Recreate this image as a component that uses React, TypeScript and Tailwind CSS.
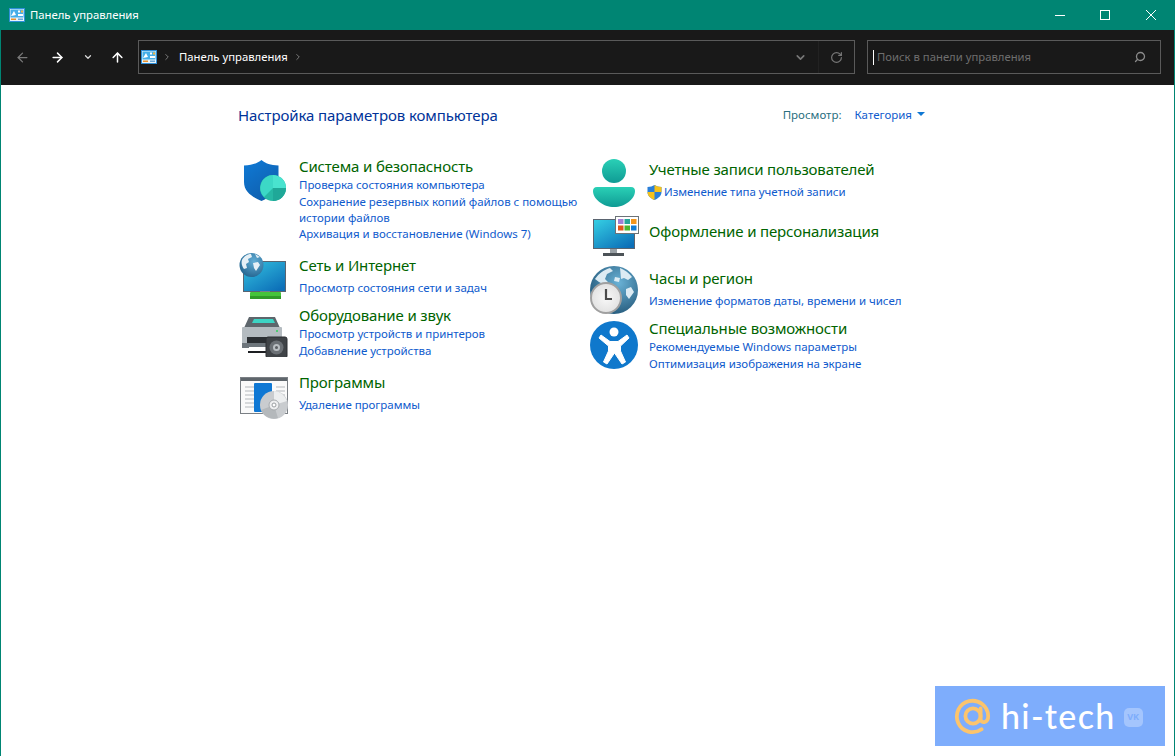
import { ArrowLeft, ArrowRight, ArrowUp, ChevronDown, ChevronRight, RotateCw, Search } from "lucide-react";
import type { ReactNode } from "react";

function PanelIcon({ className }: { className: string }) {
  return (
    <svg viewBox="0 0 16 14" className={className}>
      <rect x="0.5" y="0.5" width="15" height="13" fill="#e8f4fb" stroke="#2f8fd8" />
      <rect x="1.5" y="1.5" width="13" height="8" fill="#45aee8" />
      <path d="M2 8l3-5 2 4z" fill="#fff" />
      <rect x="9" y="2.5" width="2" height="2" fill="#fff" />
      <rect x="12" y="2.5" width="2" height="2" fill="#f2b544" />
      <rect x="9" y="6" width="5" height="2" fill="#fff" />
      <rect x="2" y="10.5" width="5" height="1.5" fill="#e8912d" />
      <rect x="9" y="10.5" width="5" height="1.5" fill="#6aa6d8" />
    </svg>
  );
}

function ShieldIcon() {
  return (
    <svg viewBox="0 0 48 48" className="w-12 h-12">
      <defs>
        <linearGradient id="sh" x1="0" y1="0" x2="0.6" y2="1">
          <stop offset="0" stopColor="#0f7ad6" />
          <stop offset="1" stopColor="#0f5fae" />
        </linearGradient>
      </defs>
      <path d="M18.500 2c4 3.500 9 5 17 5.500V24c0 10-8 15-17 19C9.500 39 1 34 1 24V7.500c8-.5 13-2 17.500-5.500z" fill="url(#sh)" />
      <circle cx="30" cy="30" r="13" fill="#26b8a4" />
      <path d="M30 17a13 13 0 0 1 13 13H30z" fill="#49e3cf" />
      <path d="M30 30h13a13 13 0 0 1-13 13z" fill="#1fa898" />
      <path d="M30 17v13l-9 9a13 13 0 0 1 9-22z" fill="#3cd8c6" />
    </svg>
  );
}

function NetworkIcon() {
  return (
    <svg viewBox="0 0 50 48" className="w-[50px] h-12">
      <defs>
        <linearGradient id="mon" x1="0" y1="0" x2="0.8" y2="1">
          <stop offset="0" stopColor="#35c3e0" />
          <stop offset="1" stopColor="#0c6fb8" />
        </linearGradient>
        <radialGradient id="ngl" cx="0.6" cy="0.35" r="0.8">
          <stop offset="0" stopColor="#62aed6" />
          <stop offset="1" stopColor="#1c5a85" />
        </radialGradient>
      </defs>
      <rect x="4.500" y="9.500" width="42" height="30" fill="url(#mon)" stroke="#5a6470" />
      <rect x="21" y="39.500" width="10" height="2" fill="#8f979e" />
      <rect x="11" y="40" width="31" height="7" rx="1" fill="#45c43a" />
      <rect x="11" y="44" width="31" height="3" fill="#2f9a28" />
      <circle cx="12.500" cy="13" r="12" fill="url(#ngl)" />
      <path d="M3 8c2-4 6-6 9-6l1 3-4 2 1 3-3 2 1 4-3 1c-2-3-3-6-2-9zM14 11l5-1 2 3-4 6-2-3zM16 2l5 3-3 1z" fill="#e6f0f6" />
    </svg>
  );
}

function PrinterIcon() {
  return (
    <svg viewBox="0 0 50 42" className="w-[50px] h-[42px]">
      <path d="M10 2h26l5 11H5z" fill="#5e666c" />
      <path d="M15 4h19l2 4H13z" fill="#3dd4c4" />
      <rect x="3" y="12" width="40" height="17" rx="1" fill="#b4bbc0" />
      <circle cx="38" cy="16" r="1" fill="#2fd05a" />
      <rect x="8" y="22" width="30" height="6" fill="#2b2f33" />
      <rect x="3" y="28" width="28" height="5" fill="#6e767c" />
      <rect x="10" y="32" width="25" height="4" fill="#fff" />
      <rect x="9" y="36" width="26" height="2" fill="#1d1f22" />
      <rect x="27" y="22" width="21" height="21" rx="2" fill="#3f4347" stroke="#2c2f32" />
      <circle cx="37.500" cy="32.500" r="7" fill="#6b7075" />
      <circle cx="37.500" cy="32.500" r="3.500" fill="#b9bec2" />
      <circle cx="37.500" cy="32.500" r="1.500" fill="#5a5e62" />
    </svg>
  );
}

function ProgramsIcon() {
  return (
    <svg viewBox="0 0 50 44" className="w-[50px] h-11">
      <rect x="1.500" y="1.500" width="47" height="36" fill="#fafafa" stroke="#7a7f84" />
      <rect x="2" y="2" width="46" height="3" fill="#5f666c" />
      <rect x="15" y="7" width="18" height="29" rx="1" fill="#0f78d4" />
      <path d="M6 11h9M6 15h9M6 19h9M6 23h9M6 27h9M6 31h9M37 11h9M37 15h9M37 19h9" stroke="#b4b8bc" strokeWidth="1" />
      <circle cx="35" cy="29" r="14" fill="#c9cccf" />
      <path d="M35 15a14 14 0 0 1 13 10L35 29z" fill="#eceeef" />
      <path d="M22 34l13-5 4 13a14 14 0 0 1-17-8z" fill="#b4b8bb" />
      <circle cx="35" cy="29" r="5" fill="#eff0f1" stroke="#a6aaad" />
      <circle cx="35" cy="29" r="2" fill="#fff" stroke="#9a9ea1" />
    </svg>
  );
}

function UserIcon() {
  return (
    <svg viewBox="0 0 48 48" className="w-12 h-12">
      <defs>
        <linearGradient id="us" x1="0" y1="0" x2="0" y2="1">
          <stop offset="0" stopColor="#2ad0b6" />
          <stop offset="1" stopColor="#0f9b94" />
        </linearGradient>
      </defs>
      <circle cx="24" cy="12" r="12" fill="url(#us)" />
      <path d="M7 28h34c3 0 4 2 4 4 0 8-10 16-21 16S3 40 3 32c0-2 1-4 4-4z" fill="url(#us)" />
    </svg>
  );
}

function PersonalizeIcon() {
  return (
    <svg viewBox="0 0 48 40" className="w-12 h-10">
      <defs>
        <linearGradient id="pm" x1="0" y1="0" x2="0.8" y2="1">
          <stop offset="0" stopColor="#35d0e4" />
          <stop offset="1" stopColor="#0c6fb8" />
        </linearGradient>
      </defs>
      <rect x="1.500" y="3.500" width="41" height="29" fill="url(#pm)" stroke="#5a6470" />
      <rect x="18" y="33" width="7" height="4" fill="#9aa1a6" />
      <rect x="11" y="37" width="21" height="3" fill="#4d5358" />
      <rect x="23.500" y="0.500" width="23" height="17" fill="#fff" stroke="#6c7378" />
      <rect x="26" y="3" width="5.500" height="5" fill="#a07fd6" />
      <rect x="32.500" y="3" width="5.500" height="5" fill="#26a69a" />
      <rect x="39" y="3" width="5.500" height="5" fill="#f3951b" />
      <rect x="26" y="9.500" width="5.500" height="5" fill="#e0561b" />
      <rect x="32.500" y="9.500" width="5.500" height="5" fill="#4db52f" />
      <rect x="39" y="9.500" width="5.500" height="5" fill="#0f7bd4" />
    </svg>
  );
}

function ClockIcon() {
  return (
    <svg viewBox="0 0 48 48" className="w-12 h-12">
      <defs>
        <radialGradient id="gl" cx="0.6" cy="0.35" r="0.75">
          <stop offset="0" stopColor="#6ab2d6" />
          <stop offset="1" stopColor="#1f5273" />
        </radialGradient>
        <radialGradient id="cl" cx="0.5" cy="0.5" r="0.5">
          <stop offset="0" stopColor="#f8f8f8" />
          <stop offset="1" stopColor="#e2e2e2" />
        </radialGradient>
      </defs>
      <circle cx="24" cy="24" r="24" fill="url(#gl)" />
      <path d="M5 13c4-6 9-9 15-11l3 3-6 3-2 5 3 3-3 3-6-3zM30 2c5 2 9 5 12 9l-4 3-4-2-3 1zM25 11l5 1-1 4-5-1zM36 23l5-2 3 5-5 7-3-4z" fill="#dcebf3" />
      <circle cx="16" cy="32" r="15" fill="url(#cl)" stroke="#a0a0a0" strokeWidth="2" />
      <path d="M16 23v10h6" fill="none" stroke="#4a4a4a" strokeWidth="2.200" />
    </svg>
  );
}

function AccessIcon() {
  return (
    <svg viewBox="0 0 48 48" className="w-12 h-12">
      <circle cx="24" cy="24" r="24" fill="#0f78cc" />
      <circle cx="24" cy="11" r="4.500" fill="#fff" />
      <path d="M11 14l9 6.500h8l9-6.500 2 3-8.500 8v5l5 11-3.500 2-7.500-11-7.500 11-3.500-2 5-11v-5L9 17z" fill="#fff" stroke="#fff" strokeLinejoin="round" />
    </svg>
  );
}

function UacShield() {
  return (
    <svg viewBox="0 0 14 15" className="w-[15px] h-[15px] shrink-0">
      <path d="M7 0c2 1.300 4 2 7 2v5c0 4-3.500 6.500-7 8-3.500-1.500-7-4-7-8V2c3 0 5-.7 7-2z" fill="#2a7fd8" />
      <path d="M7 0c2 1.300 4 2 7 2v5H7z" fill="#f5c21b" />
      <path d="M7 7H0c0 4 3.500 6.500 7 8z" fill="#f5c21b" />
    </svg>
  );
}

const Title = ({ children }: { children: ReactNode }) => (
  <div className="text-[15px] leading-5 tracking-[-0.15px] text-[#006400]">{children}</div>
);

const Link = ({ children }: { children: ReactNode }) => (
  <div className="text-[11.5px] leading-4 tracking-[-0.03px] text-[#0f5bcd]">{children}</div>
);

export default function App() {
  return (
    <div className="w-[1175px] h-[756px] overflow-hidden flex flex-col bg-white border-x border-[#008573] font-['Noto_Sans','Open_Sans',sans-serif]">
      <header className="h-[30px] shrink-0 bg-[#008573] flex items-center text-white">
        <PanelIcon className="w-4 h-[14px] ml-[8px]" />
        <span className="ml-[5px] text-[11.3px]">Панель управления</span>
        <div className="ml-auto flex items-center">
          <svg viewBox="0 0 10 10" className="w-[10px] h-[10px] mr-[35px]" shapeRendering="crispEdges">
            <rect x="0" y="5" width="10" height="1" fill="#fff" />
          </svg>
          <svg viewBox="0 0 10 10" className="w-[10px] h-[10px] mr-[36px]" shapeRendering="crispEdges">
            <rect x="0.500" y="0.500" width="9" height="9" fill="none" stroke="#fff" />
          </svg>
          <svg viewBox="0 0 10 10" className="w-[10px] h-[10px] mr-[18px]">
            <path d="M0 0l10 10M10 0L0 10" stroke="#fff" strokeWidth="1" />
          </svg>
        </div>
      </header>

      <div className="h-[55px] shrink-0 bg-[#191919] flex items-center pb-[2px]">
        <ArrowLeft size={15} strokeWidth={2} className="ml-[14px] mt-px text-[#7a7a7a]" />
        <ArrowRight size={15} strokeWidth={2.400} className="ml-[20px] mt-px text-white" />
        <ChevronDown size={10} strokeWidth={3} className="ml-[18px] mt-px text-[#d8d8d8]" />
        <ArrowUp size={15} strokeWidth={2.400} className="ml-[17px] mt-px text-white" />
        <div className="ml-[13px] w-[717px] h-[34px] border border-[#5a5a5a] flex items-center text-white">
          <PanelIcon className="w-4 h-[14px] ml-[2px] mt-px" />
          <ChevronRight size={10} strokeWidth={2.400} className="ml-[5px] mt-px text-[#7a7a7a]" />
          <span className="ml-[7px] mt-px text-[11.3px]">Панель управления</span>
          <ChevronRight size={10} strokeWidth={2.400} className="ml-[5px] mt-px text-[#7a7a7a]" />
          <ChevronDown size={13} strokeWidth={3} className="ml-auto mt-px text-[#777]" />
          <div className="ml-[11px] w-[36px] h-full border-l border-[#222] flex items-center justify-center">
            <RotateCw size={13} strokeWidth={2.200} className="mt-px text-[#777]" />
          </div>
        </div>
        <div className="ml-[12px] w-[294px] h-[34px] border border-[#5a5a5a] flex items-center">
          <div className="ml-[5px] mt-px w-px h-[15px] bg-white" />
          <span className="ml-[3px] mt-px text-[11.3px] text-[#6e6e6e]">Поиск в панели управления</span>
          <Search size={12} strokeWidth={2.600} className="ml-auto mr-[14px] mt-px text-[#8a8a8a] -scale-x-100" />
        </div>
      </div>

      <main className="flex-1 relative pl-[237px] pt-[20px]">
        <div className="w-[687px] flex items-center justify-between">
          <h1 className="text-[15px] leading-5 tracking-[-0.1px] text-[#003399]">Настройка параметров компьютера</h1>
          <div className="flex items-center text-[11.5px]">
            <span className="text-[#2a6f7f]">Просмотр:</span>
            <span className="ml-[13px] text-[#0f5bcd]">Категория</span>
            <span className="ml-[5px] mb-[2px] border-x-[4px] border-t-[4px] border-x-transparent border-t-[#0f78d4]" />
          </div>
        </div>

        <div className="flex mt-[31px]">
          <div className="w-[350px] flex flex-col">
            <div className="flex h-[98px]">
              <div className="w-[61px] shrink-0 pl-[5px] pt-[2px]"><ShieldIcon /></div>
              <div className="w-[285px]">
                <Title>Система и безопасность</Title>
                <div className="mt-px"><Link>Проверка состояния компьютера</Link></div>
                <div className="mt-px text-[11.5px] leading-[15.500px] tracking-[-0.03px] text-[#0f5bcd]">Сохранение резервных копий файлов с помощью истории файлов</div>
                <div className="mt-px"><Link>Архивация и восстановление (Windows 7)</Link></div>
              </div>
            </div>
            <div className="flex h-[50px]">
              <div className="w-[61px] shrink-0 pl-px -mt-[2px]"><NetworkIcon /></div>
              <div className="pt-[1px]">
                <Title>Сеть и Интернет</Title>
                <div className="mt-[5px]"><Link>Просмотр состояния сети и задач</Link></div>
              </div>
            </div>
            <div className="flex h-[67px]">
              <div className="w-[61px] shrink-0 pl-px pt-[11px]"><PrinterIcon /></div>
              <div className="pt-[1px]">
                <Title>Оборудование и звук</Title>
                <div className="mt-px"><Link>Просмотр устройств и принтеров</Link></div>
                <div className="mt-px"><Link>Добавление устройства</Link></div>
              </div>
            </div>
            <div className="flex">
              <div className="w-[61px] shrink-0 pl-px pt-[5px]"><ProgramsIcon /></div>
              <div className="pt-[1px]">
                <Title>Программы</Title>
                <div className="mt-[5px]"><Link>Удаление программы</Link></div>
              </div>
            </div>
          </div>

          <div className="flex flex-col">
            <div className="flex h-[60px]">
              <div className="w-[61px] shrink-0 pl-[2px] pt-[3px]"><UserIcon /></div>
              <div className="pt-[3px]">
                <Title>Учетные записи пользователей</Title>
                <div className="mt-[5px] flex items-center gap-[2px] -ml-[2px]">
                  <UacShield />
                  <Link>Изменение типа учетной записи</Link>
                </div>
              </div>
            </div>
            <div className="flex h-[51px]">
              <div className="w-[61px] shrink-0 pl-[4px]"><PersonalizeIcon /></div>
              <div className="pt-[5px]"><Title>Оформление и персонализация</Title></div>
            </div>
            <div className="flex h-[51px]">
              <div className="w-[61px] shrink-0 pl-[2px] -mt-[1px]"><ClockIcon /></div>
              <div className="pt-[1px]">
                <Title>Часы и регион</Title>
                <div className="mt-[5px]"><Link>Изменение форматов даты, времени и чисел</Link></div>
              </div>
            </div>
            <div className="flex">
              <div className="w-[61px] shrink-0 pl-[2px] pt-[3px]"><AccessIcon /></div>
              <div>
                <Title>Специальные возможности</Title>
                <div className="mt-px"><Link>Рекомендуемые Windows параметры</Link></div>
                <div className="mt-px"><Link>Оптимизация изображения на экране</Link></div>
              </div>
            </div>
          </div>
        </div>

        <div className="absolute left-[934px] top-[601px] w-[230px] h-[60px] bg-[#7eadfc] flex items-center text-white">
          <svg viewBox="0 0 40 40" className="ml-[19px] w-[38px] h-[38px] shrink-0">
            <circle cx="20" cy="20" r="8" fill="none" stroke="#fcc46c" strokeWidth="4" />
            <path d="M28 12v11c0 5 8 5 8-3a16.500 16.500 0 1 0-7 14" fill="none" stroke="#fcc46c" strokeWidth="4" strokeLinecap="round" />
          </svg>
          <span className="ml-[9px] text-[34px] leading-none font-['Lato',sans-serif] font-medium tracking-[1.300px]">hi-tech</span>
          <span className="ml-[8px] mt-[2px] w-[19px] h-[19px] shrink-0 rounded-[5px] bg-[#a4c5fd] text-[#7eadfc] text-[9px] font-bold flex items-center justify-center">VK</span>
        </div>
      </main>
    </div>
  );
}
